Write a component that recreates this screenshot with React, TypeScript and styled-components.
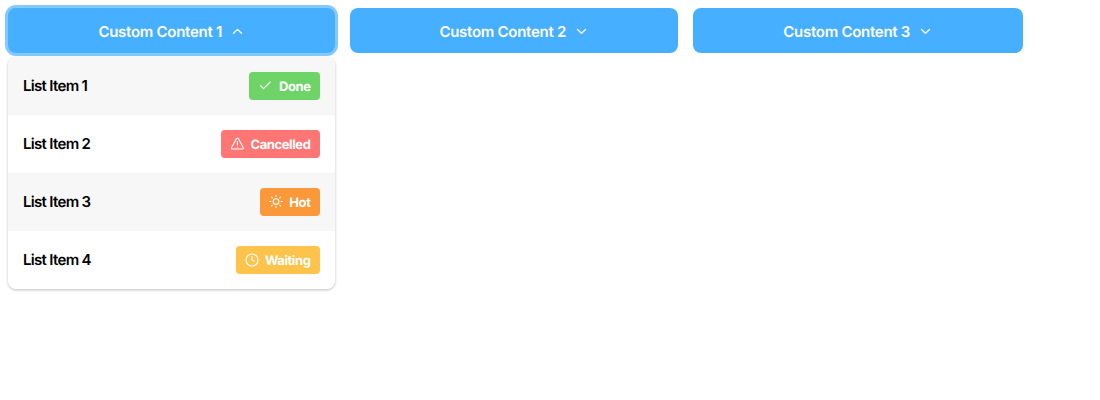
import React from "react";
import styled, { createGlobalStyle } from "styled-components";

const GlobalStyle = createGlobalStyle`
  body { margin: 0; background: #fff; font-family: Inter, sans-serif; -webkit-font-smoothing: antialiased; text-rendering: geometricPrecision; }
  * { box-sizing: border-box; }
`;
const Row = styled.div`display: flex; gap: 15px; align-items: flex-start; padding: 8px; min-height: 100vh;`;
const Dropdown = styled.div<{ $w: number }>`width: ${p => p.$w}px;`;
const Trigger = styled.button<{ $open?: boolean }>`
  width: 100%; height: 45px; border: 0; border-radius: 8px; background: #46afff; color: #fff;
  font: 600 15px/24px Inter, sans-serif; letter-spacing: -0.28px; padding: 2px 2px 0 0;
  text-rendering: geometricPrecision;
  display: flex; align-items: center; justify-content: center; gap: 9.6px;
  box-shadow: ${p => p.$open ? "0 0 0 3px #84c9ff" : "none"};
`;
const Menu = styled.div`
  margin-top: 4px; border-radius: 8px; overflow: hidden; background: #fff;
  box-shadow: 0 1px 3px rgba(0,0,0,.25);
`;
const Item = styled.div`
  height: 58px; padding: 0 15px; display: flex; align-items: center; justify-content: space-between;
  font-size: 15px; font-weight: 600; letter-spacing: -0.68px; color: #000;
  &:nth-child(odd) { background: #f7f7f7; }
`;
const Label = styled.span`padding-bottom: 2px;`;
const Badge = styled.span<{ $color: string; $w: number }>`
  width: ${p => p.$w}px; height: 28px; padding: 0 9.5px 0 9px; border-radius: 4px; background: ${p => p.$color}; color: #fff;
  display: flex; align-items: center; justify-content: space-between; font-size: 13px; font-weight: 700; letter-spacing: -0.4px;
`;
const Status = styled.span`padding-top: 1px;`;
const Icon = styled.svg`
  fill: none; stroke: currentColor; stroke-linecap: round; stroke-linejoin: round; flex: none;
`;

const Chevron = ({ up }: { up?: boolean }) => (
  <Icon width="11" height="11" viewBox="0 0 11 11" strokeWidth="1.3">
    <path d={up ? "M1.5 7.2 5.5 3.4 9.5 7.2" : "M1.5 3.5 5.5 7.3 9.5 3.5"} />
  </Icon>
);
const icons = {
  check: <path d="M2.5 6.7 5.5 9.6 12.2 3" />,
  alert: <path d="M6.4 1.7Q7.4.3 8.4 1.7L13.2 10.5Q13.7 12 12.2 12H2.6Q1.1 12 1.6 10.5ZM7.4 4.5v3.3M7.4 9.8v.1" />,
  sun: <><circle cx="7" cy="6.5" r="2.8" /><path d="M7 .4v1M7 11.6v1M.8 6.5h1M12.2 6.5h1M2.6 2.1l.7.7M10.7 10.2l.7.7M2.6 10.9l.7-.7M10.7 2.8l.7-.7" /></>,
  clock: <><circle cx="7" cy="7" r="6" /><path d="M7 3.5V7l2.2 1.3" /></>,
};
const items: { label: string; status: string; color: string; width: number; icon: keyof typeof icons }[] = [
  { label: "List Item 1", status: "Done", color: "#6fd468", width: 71, icon: "check" },
  { label: "List Item 2", status: "Cancelled", color: "#ff7675", width: 99, icon: "alert" },
  { label: "List Item 3", status: "Hot", color: "#fa983a", width: 60, icon: "sun" },
  { label: "List Item 4", status: "Waiting", color: "#fdc34a", width: 84, icon: "clock" },
];

export default function App() {
  return (
    <>
      <GlobalStyle />
      <Row>
        <Dropdown $w={327}>
          <Trigger $open>Custom Content 1<Chevron up /></Trigger>
          <Menu>
            {items.map(i => (
              <Item key={i.label}>
                <Label>{i.label}</Label>
                <Badge $color={i.color} $w={i.width}>
                  <Icon width="14" height="14" viewBox="0 0 14 14" strokeWidth="1.15">{icons[i.icon]}</Icon>
                  <Status>{i.status}</Status>
                </Badge>
              </Item>
            ))}
          </Menu>
        </Dropdown>
        <Dropdown $w={328}><Trigger>Custom Content 2<Chevron /></Trigger></Dropdown>
        <Dropdown $w={330}><Trigger>Custom Content 3<Chevron /></Trigger></Dropdown>
      </Row>
    </>
  );
}
